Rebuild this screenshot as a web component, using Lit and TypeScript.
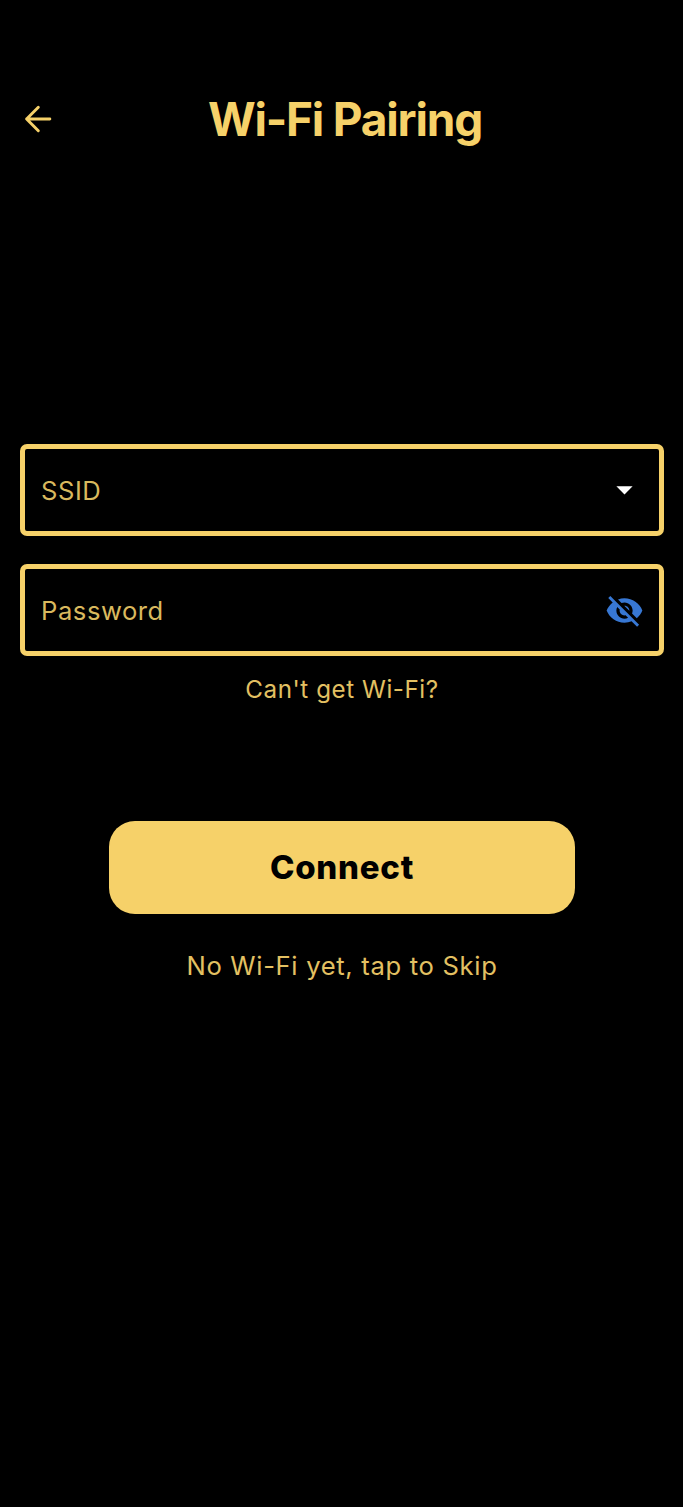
import { LitElement, html, css } from "lit";
import { customElement } from "lit/decorators.js";

@customElement("app-root")
class AppRoot extends LitElement {
  static styles = css`
    :host {
      display: block;
      min-height: 1507px;
      background: #000;
      color: #f6d169;
      font-family: Inter, "Liberation Sans", sans-serif;
    }
    * {
      box-sizing: border-box;
    }
    .page {
      display: flex;
      flex-direction: column;
      height: 1507px;
      padding: 89px 19px 0 20px;
    }
    .bar {
      display: grid;
      grid-template-columns: 39px 1fr 31px;
      align-items: center;
      height: 60px;
      margin: 0 0 295px -2px;
    }
    button {
      border: 0;
      padding: 0;
      background: none;
      color: inherit;
      font: inherit;
    }
    svg {
      display: block;
      width: 39px;
      height: 39px;
      fill: currentColor;
    }
    .back {
      height: 40px;
      fill: none;
      stroke: currentColor;
      stroke-width: 1.8;
      stroke-linecap: round;
      stroke-linejoin: round;
    }
    .title {
      margin: 0;
      text-align: center;
      font-size: 46px;
      font-weight: 700;
      line-height: 60px;
      letter-spacing: -1.2px;
      white-space: nowrap;
    }
    .field {
      display: flex;
      align-items: center;
      justify-content: space-between;
      height: 92px;
      padding: 0 15px 0 16px;
      border: 5px solid #f6d169;
      border-radius: 7px;
      font-size: 25.6px;
      letter-spacing: 0.55px;
    }
    .label {
      color: #d9b95e;
    }
    .field + .field {
      margin-top: 28px;
    }
    .caret {
      color: #fff;
      margin-top: -1px;
    }
    .eye {
      color: #3777d3;
    }
    .link {
      align-self: center;
      color: #e3c062;
      white-space: nowrap;
    }
    .help {
      margin-top: 18px;
      height: 32px;
      line-height: 32px;
      font-size: 24.2px;
      letter-spacing: 0.55px;
    }
    .connect {
      align-self: center;
      width: 466px;
      height: 93px;
      margin-top: 115px;
      padding-bottom: 2px;
      border-radius: 26px;
      background: #f6d169;
      color: #000;
      font-size: 33px;
      font-weight: 800;
      letter-spacing: 0.75px;
    }
    .skip {
      margin-top: 36px;
      height: 32px;
      line-height: 32px;
      font-size: 25.6px;
      letter-spacing: 0.68px;
    }
  `;

  render() {
    return html`
      <main class="page">
        <header class="bar">
          <button aria-label="Back">
            <svg class="back" viewBox="0 0 24 24">
              <path d="M19.6 12H5.3M12.5 4.8L5.3 12l7.2 7.2" />
            </svg>
          </button>
          <h1 class="title">Wi-Fi Pairing</h1>
        </header>
        <div class="field">
          <span class="label">SSID</span>
          <svg class="caret" viewBox="0 0 24 24"><path d="M7 10l5 5 5-5z" /></svg>
        </div>
        <div class="field">
          <span class="label">Password</span>
          <svg class="eye" viewBox="0 0 24 24">
            <path
              d="M12 7c2.76 0 5 2.24 5 5 0 .65-.13 1.26-.36 1.83l2.92 2.92c1.51-1.26 2.7-2.89 3.43-4.75-1.73-4.39-6-7.5-11-7.5-1.4 0-2.74.25-3.98.7l2.16 2.16C10.74 7.13 11.35 7 12 7zM2 4.27l2.28 2.28.46.46C3.08 8.3 1.78 10.02 1 12c1.73 4.39 6 7.5 11 7.5 1.55 0 3.03-.3 4.38-.84l.42.42L19.73 22 21 20.73 3.27 3 2 4.27zM7.53 9.8l1.55 1.55c-.05.21-.08.43-.08.65 0 1.66 1.34 3 3 3 .22 0 .44-.03.65-.08l1.55 1.55c-.67.33-1.41.53-2.2.53-2.76 0-5-2.24-5-5 0-.79.2-1.53.53-2.2zm4.31-.78l3.15 3.15.02-.16c0-1.66-1.34-3-3-3l-.17.01z"
            />
          </svg>
        </div>
        <button class="link help">Can't get Wi-Fi?</button>
        <button class="connect">Connect</button>
        <button class="link skip">No Wi-Fi yet, tap to Skip</button>
      </main>
    `;
  }
}
